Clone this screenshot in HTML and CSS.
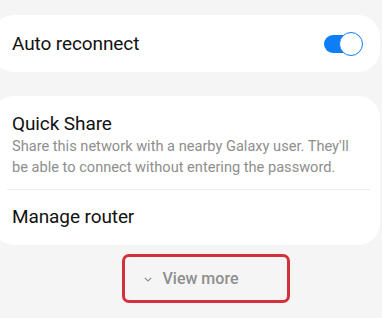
FILE: index.html
```html
<!DOCTYPE html>
<html lang="en">

<head>
    <meta charset="UTF-8">
    <meta name="viewport" content="width=device-width, initial-scale=1.0">
    <title>Wi-Fi settings</title>
    <link rel="stylesheet" href="styles.css">
</head>

<body>
    <div class="settings">
        <div class="card card-toggle">
            <span class="item-title">Auto reconnect</span>
            <span class="switch on"><span class="switch-thumb"></span></span>
        </div>

        <div class="card card-list">
            <div class="list-item first">
                <div class="item-title">Quick Share</div>
                <div class="item-desc">Share this network with a nearby Galaxy user. They'll be able to connect without entering the password.</div>
            </div>
            <div class="divider"></div>
            <div class="list-item last">
                <div class="item-title">Manage router</div>
            </div>
        </div>

        <div class="view-more">
            <svg class="chevron" width="8" height="5" viewBox="0 0 8 5">
                <path d="M0.8 0.8 L4 4 L7.2 0.8" fill="none" stroke="#8f8f8f" stroke-width="1.2" />
            </svg>
            <span class="view-more-text">View more</span>
            <div class="highlight"></div>
        </div>
    </div>
</body>

</html>
```

FILE: styles.css
```css
:root {
    --bg-color: #f5f5f5;
    --card-bg: #ffffff;
    --text-color: #121212;
    --muted-color: #8e8e8e;
    --accent: #0d7ef6;
    --divider: #ececec;
    --radius: 22px;
}

* {
    margin: 0;
    padding: 0;
    box-sizing: border-box;
}

body {
    font-family: Roboto, "Noto Sans", sans-serif;
    background-color: var(--bg-color);
    color: var(--text-color);
    width: 382px;
    height: 318px;
    overflow: hidden;
}

.settings {
    display: flex;
    flex-direction: column;
    padding-top: 15px;
}

.card {
    background-color: var(--card-bg);
    border-radius: var(--radius);
    margin-left: -8px;
    margin-right: 2px;
}

.card-toggle {
    height: 57px;
    display: flex;
    align-items: center;
    justify-content: space-between;
    padding: 1px 18px 0 20px;
}

.card-list {
    margin-top: 24px;
    height: 149px;
}

.item-title {
    font-size: 19px;
    line-height: 24px;
    letter-spacing: -0.1px;
}

.item-desc {
    font-size: 14.6px;
    line-height: 21px;
    color: var(--muted-color);
    padding-right: 14px;
}

.list-item {
    padding: 0 12px 0 20px;
}

.list-item.first {
    padding-top: 16px;
    padding-bottom: 11px;
}

.list-item.last {
    padding-top: 15px;
}

.divider {
    height: 1px;
    background-color: var(--divider);
    margin: 0 10px 0 15px;
}

.switch {
    position: relative;
    width: 38px;
    height: 18px;
    border-radius: 9px;
    background-color: var(--accent);
}

.switch-thumb {
    position: absolute;
    right: -1px;
    top: -3px;
    width: 24px;
    height: 24px;
    border-radius: 50%;
    background-color: #ffffff;
    border: 1.5px solid var(--accent);
}

.view-more {
    position: relative;
    display: flex;
    align-items: center;
    justify-content: center;
    gap: 11px;
    height: 49px;
    margin-top: 9px;
}

.chevron {
    margin-top: 1px;
}

.view-more-text {
    font-size: 16px;
    color: var(--muted-color);
    font-weight: 500;
}

.highlight {
    position: absolute;
    left: 122px;
    top: 0;
    width: 168px;
    height: 49px;
    border: 3px solid #d3303c;
    border-radius: 7px;
}
```
